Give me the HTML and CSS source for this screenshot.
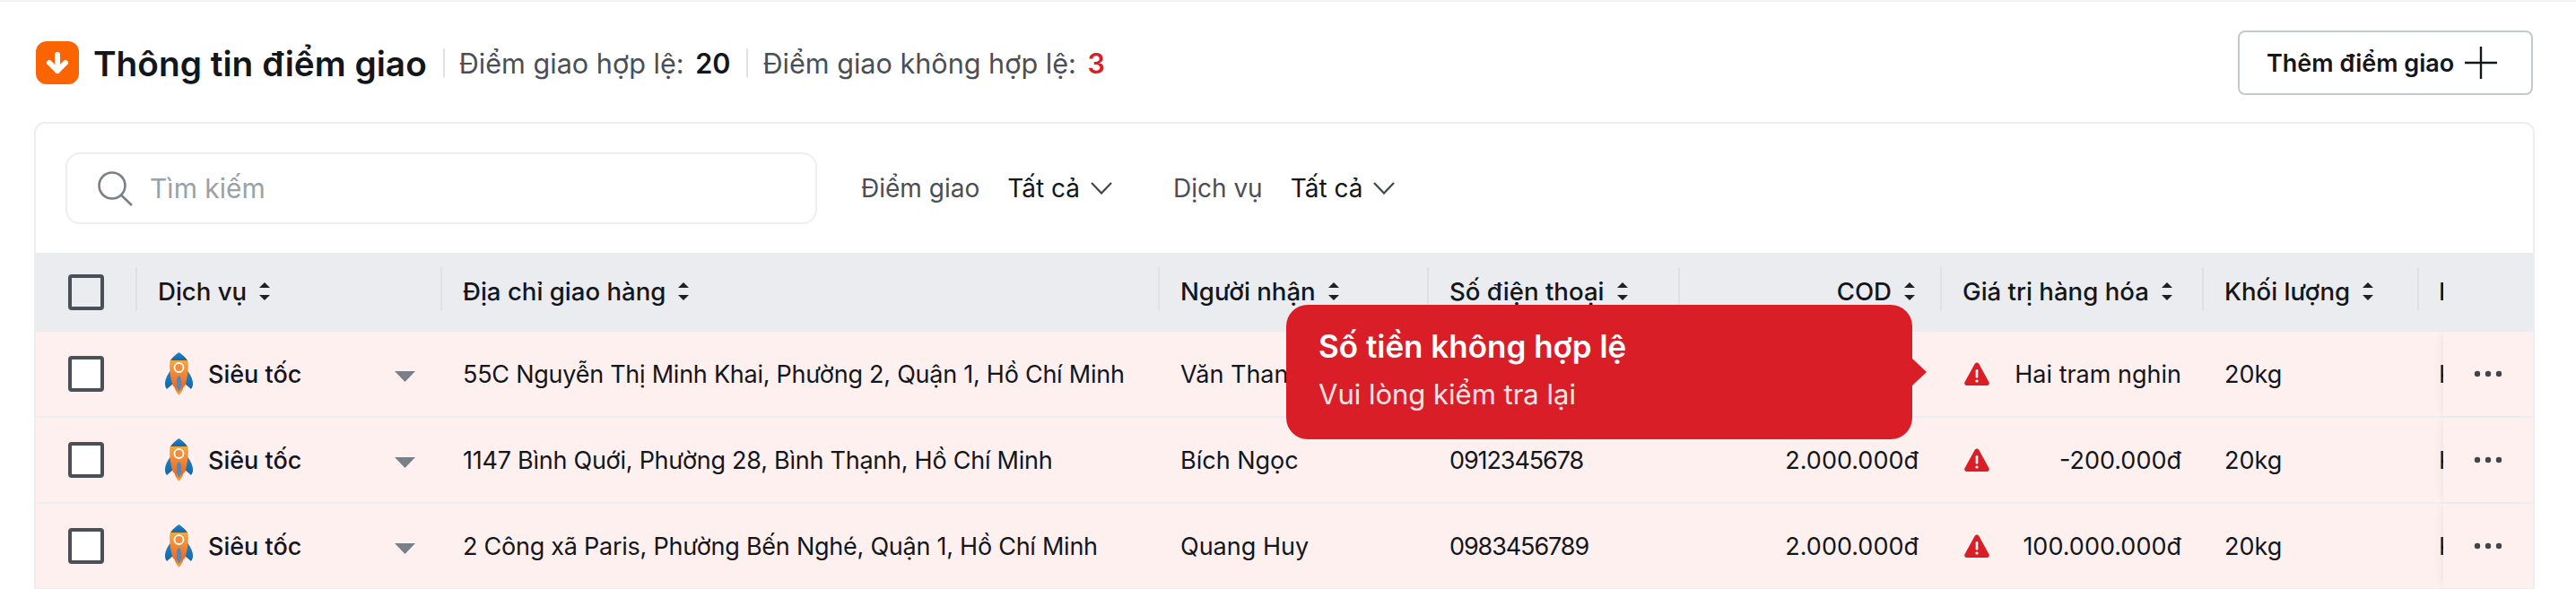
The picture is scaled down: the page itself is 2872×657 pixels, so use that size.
FILE: index.html
```html
<!DOCTYPE html>
<html>
<head>
<meta charset="utf-8">
<title>Thông tin điểm giao</title>
<link rel="stylesheet" href="styles.css">
</head>
<body>
<svg class="defs" width="0" height="0">
    <defs>
        <linearGradient id="rocketBody" x1="0" y1="0" x2="0" y2="1">
            <stop offset="0" stop-color="#f8a63c"/>
            <stop offset="1" stop-color="#ec6a2c"/>
        </linearGradient>
        <linearGradient id="rocketBlue" x1="0" y1="0" x2="0" y2="1">
            <stop offset="0" stop-color="#1f86c9"/>
            <stop offset="1" stop-color="#1268a6"/>
        </linearGradient>
        <linearGradient id="rocketFlame" x1="0" y1="0" x2="0" y2="1">
            <stop offset="0" stop-color="#e2542a"/>
            <stop offset="1" stop-color="#f6b23c"/>
        </linearGradient>
        <symbol id="rocket" viewBox="0 0 31 48">
            <path d="M7 19 C3 24 0 30 0 35 C0 38 1 40 2 41 L9 35 Z" fill="url(#rocketBlue)"/>
            <path d="M24 19 C28 24 31 30 31 35 C31 38 30 40 29 41 L22 35 Z" fill="url(#rocketBlue)"/>
            <path d="M10 36 L21 36 C21 40 18 45 15.5 48 C13 45 10 40 10 36 Z" fill="url(#rocketFlame)"/>
            <path d="M15.5 0 C20 3 23 6 25 9 L6 9 C8 6 11 3 15.5 0 Z" fill="url(#rocketBlue)"/>
            <path d="M5.5 9 L25.5 9 C26.5 17 25 30 22 38 L9 38 C6 30 4.5 17 5.5 9 Z" fill="url(#rocketBody)"/>
            <circle cx="15.5" cy="17" r="5" fill="#f08a3c" stroke="#fff" stroke-width="1.8"/>
            <path d="M15.5 26 C19 29 19 37 15.5 44 C12 37 12 29 15.5 26 Z" fill="#3f8fc9"/>
        </symbol>
        <symbol id="warn" viewBox="0 0 28 26">
            <path d="M11.6 2 C12.7 0 15.3 0 16.4 2 L27.4 22 C28.5 24 27.4 26 25 26 L3 26 C0.6 26 -0.5 24 0.6 22 Z" fill="#da1e28"/>
            <rect x="12.7" y="8" width="2.6" height="9.5" rx="1.2" fill="#fff"/>
            <circle cx="14" cy="21" r="1.6" fill="#fff"/>
        </symbol>
        <symbol id="sort" viewBox="0 0 12 20">
            <path d="M6 0 L12 6 L0 6 Z" fill="#1d2025"/>
            <path d="M6 20 L12 14 L0 14 Z" fill="#1d2025"/>
        </symbol>
        <symbol id="dots" viewBox="0 0 32 8">
            <circle cx="4" cy="4" r="3.2" fill="#41464e"/>
            <circle cx="16" cy="4" r="3.2" fill="#41464e"/>
            <circle cx="28" cy="4" r="3.2" fill="#41464e"/>
        </symbol>
        <symbol id="caret" viewBox="0 0 23 12">
            <path d="M0 0 L23 0 L11.5 12 Z" fill="#7a8088"/>
        </symbol>
        <symbol id="chev" viewBox="0 0 24 14">
            <path d="M1 1 L12 12.5 L23 1" fill="none" stroke="#41464e" stroke-width="2.2"/>
        </symbol>
    </defs>
</svg>

<div class="topline"></div>

<div class="head">
    <svg class="head-icon" viewBox="0 0 48 48">
        <rect width="48" height="48" rx="12" fill="#fb6400"/>
        <path d="M24 15 L24 33 M15 24 L24 33 L33 24" fill="none" stroke="#fff" stroke-width="6" stroke-linecap="round" stroke-linejoin="round"/>
    </svg>
    <h1 class="head-title">Thông tin điểm giao</h1>
    <div class="head-stat">Điểm giao hợp lệ: <b>20</b></div>
    <div class="head-stat">Điểm giao không hợp lệ: <b class="red">3</b></div>
    <button class="add-btn">Thêm điểm giao
        <svg class="add-plus" viewBox="0 0 36 36"><path d="M18 0 V36 M0 18 H36" stroke="#13161b" stroke-width="2.4"/></svg>
    </button>
</div>

<div class="card">
    <div class="filters">
        <div class="search">
            <svg class="search-icon" viewBox="0 0 40 40"><circle cx="17" cy="17" r="14.5" fill="none" stroke="#7a8088" stroke-width="2.6"/><path d="M27.5 28 L39 39" stroke="#7a8088" stroke-width="2.6"/></svg>
            <span class="search-text">Tìm kiếm</span>
        </div>
        <div class="filter"><span class="filter-label">Điểm giao</span><span class="filter-value">Tất cả</span><svg class="chev"><use href="#chev"/></svg></div>
        <div class="filter"><span class="filter-label">Dịch vụ</span><span class="filter-value">Tất cả</span><svg class="chev"><use href="#chev"/></svg></div>
    </div>

    <div class="table">
        <div class="row row-head">
            <div class="cell cell-check"><span class="check"></span></div>
            <div class="cell">Dịch vụ <svg class="sort"><use href="#sort"/></svg></div>
            <div class="cell">Địa chỉ giao hàng <svg class="sort"><use href="#sort"/></svg></div>
            <div class="cell">Người nhận <svg class="sort"><use href="#sort"/></svg></div>
            <div class="cell">Số điện thoại <svg class="sort"><use href="#sort"/></svg></div>
            <div class="cell cell-right">COD <svg class="sort"><use href="#sort"/></svg></div>
            <div class="cell">Giá trị hàng hóa <svg class="sort"><use href="#sort"/></svg></div>
            <div class="cell">Khối lượng <svg class="sort"><use href="#sort"/></svg></div>
            <div class="cell cell-cut">Kích thước</div>
            <div class="cell-fixed"></div>
        </div>

        <div class="row">
            <div class="cell cell-check"><span class="check"></span></div>
            <div class="cell cell-service"><svg class="rocket"><use href="#rocket"/></svg><span class="service-name">Siêu tốc</span><svg class="caret"><use href="#caret"/></svg></div>
            <div class="cell cell-address">55C Nguyễn Thị Minh Khai, Phường 2, Quận 1, Hồ Chí Minh</div>
            <div class="cell">Văn Thanh</div>
            <div class="cell cell-phone"></div>
            <div class="cell cell-right"></div>
            <div class="cell cell-value"><svg class="warn"><use href="#warn"/></svg><span>Hai tram nghin</span></div>
            <div class="cell">20kg</div>
            <div class="cell cell-cut">Kích thước</div>
            <div class="cell-fixed"><svg class="dots"><use href="#dots"/></svg></div>
        </div>

        <div class="row">
            <div class="cell cell-check"><span class="check"></span></div>
            <div class="cell cell-service"><svg class="rocket"><use href="#rocket"/></svg><span class="service-name">Siêu tốc</span><svg class="caret"><use href="#caret"/></svg></div>
            <div class="cell cell-address">1147 Bình Quới, Phường 28, Bình Thạnh, Hồ Chí Minh</div>
            <div class="cell">Bích Ngọc</div>
            <div class="cell cell-phone">0912345678</div>
            <div class="cell cell-right">2.000.000đ</div>
            <div class="cell cell-value"><svg class="warn"><use href="#warn"/></svg><span>-200.000đ</span></div>
            <div class="cell">20kg</div>
            <div class="cell cell-cut">Kích thước</div>
            <div class="cell-fixed"><svg class="dots"><use href="#dots"/></svg></div>
        </div>

        <div class="row">
            <div class="cell cell-check"><span class="check"></span></div>
            <div class="cell cell-service"><svg class="rocket"><use href="#rocket"/></svg><span class="service-name">Siêu tốc</span><svg class="caret"><use href="#caret"/></svg></div>
            <div class="cell cell-address">2 Công xã Paris, Phường Bến Nghé, Quận 1, Hồ Chí Minh</div>
            <div class="cell">Quang Huy</div>
            <div class="cell cell-phone">0983456789</div>
            <div class="cell cell-right">2.000.000đ</div>
            <div class="cell cell-value"><svg class="warn"><use href="#warn"/></svg><span>100.000.000đ</span></div>
            <div class="cell">20kg</div>
            <div class="cell cell-cut">Kích thước</div>
            <div class="cell-fixed"><svg class="dots"><use href="#dots"/></svg></div>
        </div>

        <div class="tip">
            <div class="tip-title">Số tiền không hợp lệ</div>
            <div class="tip-text">Vui lòng kiểm tra lại</div>
        </div>
    </div>
</div>
</body>
</html>
```

FILE: styles.css
```css
* {
    margin: 0;
    padding: 0;
    box-sizing: border-box;
}

html, body {
    height: 657px;
    overflow: hidden;
    background: #fff;
}

body {
    font-family: "Inter", "Liberation Sans", sans-serif;
    font-size: 27px;
    color: #13161b;
}

.defs {
    display: block;
    height: 0;
}

.red {
    color: #da1e28;
}

.topline {
    height: 2px;
    background: #f1f2f4;
}

/* header */
.head {
    display: flex;
    align-items: center;
    height: 134px;
    padding: 32px 48px 30px 40px;
}

.head-icon {
    width: 48px;
    height: 48px;
    margin-right: 16px;
}

.head-title {
    font-size: 38.8px;
    font-weight: 600;
    padding-right: 18px;
}

.head-stat {
    height: 32px;
    display: flex;
    align-items: center;
    gap: 4px;
    padding: 0 18px 0 16px;
    border-left: 2px solid #dfe1e5;
    font-size: 30.6px;
    color: #4a4f57;
    white-space: pre;
}

.head-stat b {
    font-weight: 600;
    color: #13161b;
}

.head-stat b.red {
    color: #da1e28;
}

.add-btn {
    display: flex;
    align-items: center;
    gap: 12px;
    margin-left: auto;
    width: 329px;
    height: 72px;
    padding-left: 30px;
    border: 2px solid #c4c9cf;
    border-radius: 8px;
    background: #fff;
    font: 600 27px "Inter", "Liberation Sans", sans-serif;
    color: #13161b;
}

.add-plus {
    width: 36px;
    height: 36px;
}

/* card */
.card {
    width: 2788px;
    margin-left: 38px;
    border: 2px solid #edeef2;
    border-bottom: 0;
    border-radius: 12px 12px 0 0;
}

.filters {
    display: flex;
    align-items: center;
    height: 144px;
    padding-left: 33px;
}

.search {
    display: flex;
    align-items: center;
    width: 838px;
    height: 80px;
    padding-left: 33px;
    margin-right: 49px;
    border: 2px solid #edeef2;
    border-radius: 16px;
}

.search-icon {
    width: 40px;
    height: 40px;
    margin-right: 19px;
}

.search-text {
    color: #9aa1a9;
    font-size: 30px;
}

.filter {
    display: flex;
    align-items: center;
    margin-right: 68px;
    font-size: 28px;
}

.filter-label {
    color: #4a4f57;
    margin-right: 31px;
}

.filter-value {
    margin-right: 12px;
}

.chev {
    width: 24px;
    height: 14px;
}

/* table */
.table {
    position: relative;
}

.row {
    display: grid;
    grid-template-columns: 111px 340px 800px 300px 280px 292px 292px 240px 29px 100px;
    height: 96px;
    background: #fff0f0;
    border-bottom: 2px solid #edeef2;
}

.cell {
    display: flex;
    align-items: center;
    padding-left: 25px;
    min-width: 0;
    white-space: nowrap;
    overflow: hidden;
}

.cell-check {
    padding-left: 36px;
}

.check {
    display: block;
    width: 40px;
    height: 40px;
    border: 4px solid #4b5058;
    border-radius: 4px;
    background: #fff;
}

.cell-right {
    justify-content: flex-end;
    padding-right: 24px;
}

.cell-address {
    letter-spacing: -0.25px;
}

.cell-phone {
    letter-spacing: -1.1px;
}

.cell-service {
    padding-left: 33px;
}

.rocket {
    width: 31px;
    height: 48px;
    margin-right: 17px;
    flex: none;
}

.service-name {
    font-weight: 500;
    width: 208px;
}

.caret {
    width: 23px;
    height: 12px;
    margin-top: 6px;
    flex: none;
}

.cell-value {
    justify-content: space-between;
    padding-right: 23px;
    padding-left: 27px;
}

.cell-cut {
    padding-left: 24px;
}

.warn {
    width: 28px;
    height: 26px;
    flex: none;
}

.cell-fixed {
    display: flex;
    align-items: center;
    justify-content: center;
    background: #fff0f0;
    box-shadow: -6px 0 8px -4px rgba(60, 60, 80, 0.08);
}

.dots {
    width: 32px;
    height: 8px;
}

/* header row */
.row-head {
    height: 88px;
    background: #ebecf0;
    border-bottom: 0;
    font-weight: 500;
    font-size: 27.6px;
    align-items: start;
}

.row-head .cell {
    height: 48px;
    margin-top: 16px;
    gap: 14px;
    border-left: 2px solid #dfe1e5;
    padding-left: 23px;
    padding-top: 6px;
}

.row-head .cell-check {
    border-left: 0;
    padding-left: 36px;
    height: 40px;
    margin-top: 24px;
    padding-top: 0;
}

.row-head .check {
    background: transparent;
}

.row-head .cell-right {
    padding-right: 28px;
}

.row-head .cell-cut {
    padding-left: 22px;
}

.row-head .cell-fixed {
    height: 88px;
    background: #ebecf0;
    box-shadow: none;
}

.sort {
    width: 12px;
    height: 20px;
    flex: none;
}

/* tooltip */
.tip {
    position: absolute;
    left: 1394px;
    top: 58px;
    width: 698px;
    height: 150px;
    padding: 25px 36px;
    background: #da1e28;
    border-radius: 24px;
    color: #fff;
}

.tip:after {
    content: '';
    position: absolute;
    left: 100%;
    top: 60px;
    border-top: 15px solid transparent;
    border-bottom: 15px solid transparent;
    border-left: 16px solid #da1e28;
}

.tip-title {
    font-size: 35px;
    font-weight: 600;
    margin-bottom: 14px;
}

.tip-text {
    font-size: 31px;
    color: #ffe3e4;
}
```
